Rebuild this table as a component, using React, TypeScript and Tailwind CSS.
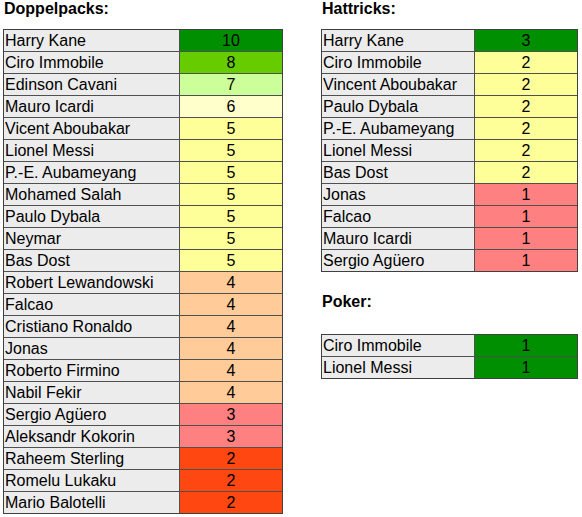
import React from "react";

type Row = [string, number, string];

const C = {
  g10: "bg-[#008f00]",
  g8: "bg-[#66cc00]",
  g7: "bg-[#ccff99]",
  y6: "bg-[#ffffcc]",
  y5: "bg-[#ffff99]",
  o4: "bg-[#ffcc99]",
  r3: "bg-[#ff8080]",
  r2: "bg-[#ff4712]",
};

const doppel: Row[] = [
  ["Harry Kane", 10, C.g10],
  ["Ciro Immobile", 8, C.g8],
  ["Edinson Cavani", 7, C.g7],
  ["Mauro Icardi", 6, C.y6],
  ["Vicent Aboubakar", 5, C.y5],
  ["Lionel Messi", 5, C.y5],
  ["P.-E. Aubameyang", 5, C.y5],
  ["Mohamed Salah", 5, C.y5],
  ["Paulo Dybala", 5, C.y5],
  ["Neymar", 5, C.y5],
  ["Bas Dost", 5, C.y5],
  ["Robert Lewandowski", 4, C.o4],
  ["Falcao", 4, C.o4],
  ["Cristiano Ronaldo", 4, C.o4],
  ["Jonas", 4, C.o4],
  ["Roberto Firmino", 4, C.o4],
  ["Nabil Fekir", 4, C.o4],
  ["Sergio Agüero", 3, C.r3],
  ["Aleksandr Kokorin", 3, C.r3],
  ["Raheem Sterling", 2, C.r2],
  ["Romelu Lukaku", 2, C.r2],
  ["Mario Balotelli", 2, C.r2],
];

const hat: Row[] = [
  ["Harry Kane", 3, C.g10],
  ["Ciro Immobile", 2, C.y5],
  ["Vincent Aboubakar", 2, C.y5],
  ["Paulo Dybala", 2, C.y5],
  ["P.-E. Aubameyang", 2, C.y5],
  ["Lionel Messi", 2, C.y5],
  ["Bas Dost", 2, C.y5],
  ["Jonas", 1, C.r3],
  ["Falcao", 1, C.r3],
  ["Mauro Icardi", 1, C.r3],
  ["Sergio Agüero", 1, C.r3],
];

const poker: Row[] = [
  ["Ciro Immobile", 1, C.g10],
  ["Lionel Messi", 1, C.g10],
];

function Table({ rows, nameW }: { rows: Row[]; nameW: string }) {
  return (
    <div className="flex flex-col border border-[#404040]">
      {rows.map(([n, v, bg], i) => (
        <div
          key={i}
          className={`flex ${i > 0 ? "h-[22px] border-t border-[#505050]" : "h-[21px]"}`}
        >
          <div
            className={`${nameW} bg-[#ececec] border-r border-[#505050] pl-[1px] leading-[21px] whitespace-nowrap overflow-hidden`}
          >
            {n}
          </div>
          <div className={`w-[102px] ${bg} text-center leading-[21px]`}>{v}</div>
        </div>
      ))}
    </div>
  );
}

export default function App() {
  return (
    <div
      className="w-[582px] h-[517px] bg-white text-black text-[16px] flex"
      style={{ fontFamily: '"Liberation Sans", Arial, sans-serif' }}
    >
      <div className="ml-[3px] flex flex-col">
        <div className="h-[29px] font-bold leading-[18px] pl-[1px]">Doppelpacks:</div>
        <Table rows={doppel} nameW="w-[176px]" />
      </div>
      <div className="ml-[38px] flex flex-col">
        <div className="h-[29px] font-bold leading-[18px] pl-[1px]">Hattricks:</div>
        <Table rows={hat} nameW="w-[153px]" />
        <div className="mt-[21px] h-[41px] font-bold leading-[18px] pl-[1px]">Poker:</div>
        <Table rows={poker} nameW="w-[153px]" />
      </div>
    </div>
  );
}
